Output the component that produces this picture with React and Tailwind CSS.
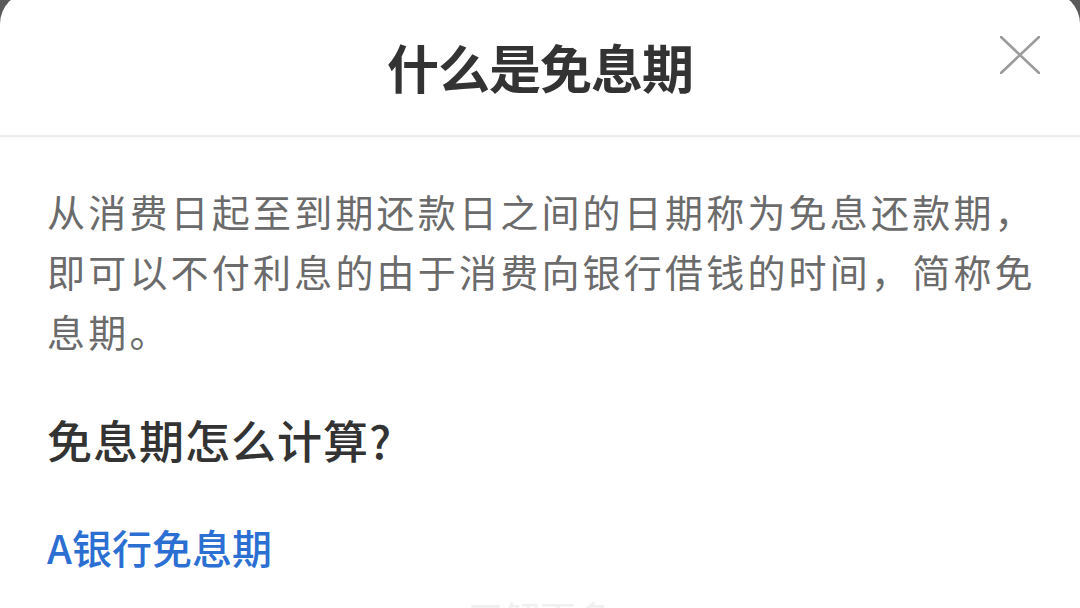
import React from 'react';

const CJK = '"Noto Sans CJK SC", "Noto Sans", sans-serif';

const CloseIcon = () => (
  <svg width="40" height="38" viewBox="0 0 40 38" fill="none">
    <path d="M1 1 L39 37 M39 1 L1 37" stroke="#9b9b9b" strokeWidth="2.6" strokeLinecap="round" />
  </svg>
);

const App = () => {
  return (
    <div className="h-[608px] w-[1080px] overflow-hidden bg-[#5a5a5a]" style={{ fontFamily: CJK }}>
      <div className="-mt-2 h-[624px] rounded-t-[32px] bg-white">
        {/* Header */}
        <div className="relative flex h-[145px] items-center justify-center border-b-2 border-[#ececec] pt-[6px] shadow-[0_1px_2px_rgba(0,0,0,0.03)]">
          <h1 className="text-[52px] leading-none font-bold tracking-[-1px] text-[#333333]">什么是免息期</h1>
          <button className="absolute top-[44px] right-[40px]">
            <CloseIcon />
          </button>
        </div>

        {/* Body */}
        <div className="px-[47px] pt-[44px]">
          <p className="text-[38px] leading-[60px] tracking-[3.2px] whitespace-nowrap text-[#6b6b6b]">
            从消费日起至到期还款日之间的日期称为免息还款期，
            <br />
            即可以不付利息的由于消费向银行借钱的时间，简称免
            <br />
            息期。
          </p>

          <h2 className="mt-[49px] text-[45px] leading-[60px] font-medium tracking-[1px] text-[#333333]">
            免息期怎么计算?
          </h2>

          <a className="mt-[47px] block text-[40px] leading-[60px] font-medium text-[#2b6fd3]">A银行免息期</a>

          <div className="mt-[22px] text-center text-[36px] leading-none text-[#f0f0f0]">了解更多</div>
        </div>
      </div>
    </div>
  );
};

export default App;
